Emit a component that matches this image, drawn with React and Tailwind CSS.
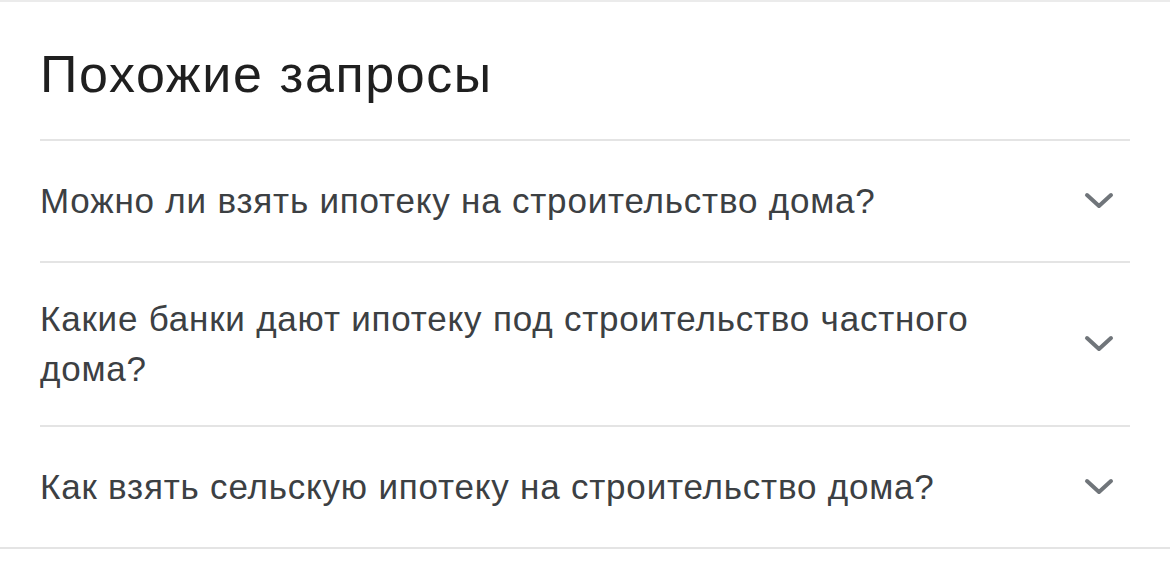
import React from "react";

const questions = [
  "Можно ли взять ипотеку на строительство дома?",
  "Какие банки дают ипотеку под строительство частного дома?",
  "Как взять сельскую ипотеку на строительство дома?",
];

const Chevron = () => (
  <svg width="30" height="20" viewBox="0 0 30 20" fill="none" className="shrink-0">
    <path d="M3 4l12 11L27 4" stroke="#70757a" strokeWidth="4" strokeLinecap="round" strokeLinejoin="round" />
  </svg>
);

export default function App() {
  return (
    <div className="w-[1170px] h-[576px] bg-white overflow-hidden font-['Liberation_Sans',Arial,sans-serif]">
      <div className="border-t-2 border-[#ebebeb]">
        <div className="px-10">
          <h2 className="pt-[42px] pb-[35px] text-[52px] leading-[60px] tracking-[1.6px] text-[#1f1f1f] font-normal">
            Похожие запросы
          </h2>
          {questions.map((q) => (
            <div key={q} className="border-t-2 border-[#e4e4e4] flex items-center justify-between gap-10 min-h-[122px] py-[31px]">
              <div className="text-[35px] leading-[50px] tracking-[0.8px] text-[#3c4043] max-w-[1000px]">{q}</div>
              <div className="pr-[16px]">
                <Chevron />
              </div>
            </div>
          ))}
        </div>
        <div className="border-t-2 border-[#e4e4e4]" />
      </div>
    </div>
  );
}
